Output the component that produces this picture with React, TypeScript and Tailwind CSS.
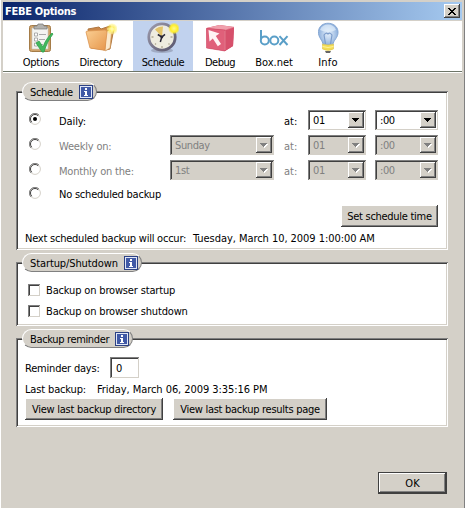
import type { ReactNode } from "react";

const raised =
  "bg-[#d4d0c8] shadow-[inset_-1px_-1px_#404040,inset_1px_1px_#fff,inset_-2px_-2px_#808080]";
const sunken =
  "shadow-[inset_1px_1px_#808080,inset_-1px_-1px_#d4d0c8,inset_2px_2px_#404040]";

function Label({ children, className = "" }: { children: ReactNode; className?: string }) {
  return <span className={`block translate-y-px ${className}`}>{children}</span>;
}

function InfoBadge() {
  return (
    <svg width="14" height="14" viewBox="0 0 14 14" className="shrink-0" shapeRendering="crispEdges">
      <rect width="14" height="14" fill="#2c4184" />
      <rect x="1" y="1" width="12" height="12" fill="#dfe6f6" />
      <rect x="2" y="2" width="10" height="10" fill="#4059a6" />
      <path d="M6 3h2v2H6zM5 6h3v4h1v1H5v-1h1V7H5z" fill="#fff" />
    </svg>
  );
}

function Group({ title, titleClass, size, pill, children }: { title: string; titleClass: string; size: string; pill: string; children: ReactNode }) {
  return (
    <section className={`relative w-[432px] bg-white shadow-[inset_1px_1px_#808080,inset_-1px_-1px_#fff,inset_2px_2px_#404040,inset_-2px_-2px_#d4d0c8] ${size}`}>
      <div className={`absolute left-[6px] top-[-9px] flex h-[19px] items-center justify-between rounded-full border border-[#fff] border-b-[#808080] border-r-[#808080] bg-[#d4d0c8] pl-[7px] pr-[3px] ${pill}`}>
        <Label className={titleClass}>{title}</Label>
        <InfoBadge />
      </div>
      {children}
    </section>
  );
}

function Select({ value, width, disabled = false }: { value: string; width: string; disabled?: boolean }) {
  return (
    <div className={`flex h-5 shrink-0 items-center justify-between p-[2px] pl-[5px] ${sunken} ${width} ${disabled ? "bg-[#d4d0c8] text-[#808080]" : "bg-white"}`}>
      <Label className="tracking-[-0.4px]">{value}</Label>
      <span className={`flex h-4 w-4 items-center justify-center ${raised}`}>
        <svg width="8" height="5" viewBox="0 0 8 5" shapeRendering="crispEdges">
          {disabled && <path d="M1 1h7v1H7v1H6v1H5v1H4V4H3V3H2V2H1z" fill="#fff" />}
          <path d="M0 0h7v1H6v1H5v1H4v1H3V3H2V2H1V1H0z" fill={disabled ? "#808080" : "#000"} />
        </svg>
      </span>
    </div>
  );
}

function Radio({ checked = false }: { checked?: boolean }) {
  return (
    <svg width="12" height="12" viewBox="0 0 12 12" className="shrink-0">
      <circle cx="6" cy="6" r="5.4" fill="#fff" stroke="#d4d0c8" />
      <path d="M2 10A5.5 5.5 0 0 1 10 2" fill="none" stroke="#808080" />
      <path d="M2.8 9.2A4.5 4.5 0 0 1 9.2 2.8" fill="none" stroke="#404040" />
      {checked && <circle cx="6" cy="6" r="2" fill="#000" />}
    </svg>
  );
}

function ScheduleRow({ label, labelClass, day, disabled, checked }: { label: string; labelClass: string; day?: string; disabled?: boolean; checked?: boolean }) {
  return (
    <div className={`flex h-[25px] items-start ${disabled ? "text-[#808080]" : ""}`}>
      <div className="w-[30px] pt-[3px]"><Radio checked={checked} /></div>
      <div className="flex h-[22px] w-[111px] items-center"><Label className={labelClass}>{label}</Label></div>
      <div className="w-[114px]">{day && <Select value={day} width="w-[104px]" disabled />}</div>
      <div className="flex h-[22px] w-[24px] items-center"><Label>at:</Label></div>
      <Select value="01" width="w-[58px]" disabled={disabled} />
      <div className="w-[9px]" />
      <Select value=":00" width="w-[63px]" disabled={disabled} />
    </div>
  );
}

function Button({ children, className }: { children: ReactNode; className: string }) {
  return (
    <button className={`flex h-[22px] shrink-0 items-center justify-center ${raised} ${className}`}>
      <Label>{children}</Label>
    </button>
  );
}

function CheckRow({ label }: { label: string }) {
  return (
    <label className="flex h-[21px] items-center">
      <span className={`mr-[6px] h-3 w-3 bg-white ${sunken}`} />
      <Label className="tracking-[-0.16px]">{label}</Label>
    </label>
  );
}

function OptionsIcon() {
  return (
    <svg width="32" height="32" viewBox="0 0 32 32">
      <rect x="4.500" y="3.500" width="21" height="26" rx="2" fill="#cfa36b" stroke="#a57c48" />
      <path d="M7 6h16v21H7z" fill="#f4f4f1" stroke="#c9c9c4" strokeWidth=".6" />
      <path d="M9 7V4h3l1-2h5l1 2h3v3z" fill="#b3b2ae" stroke="#777" strokeWidth=".7" />
      <path d="M9.500 11h3v3h-3zM9.500 16h3v3h-3zM9.500 21h3v3h-3z" fill="#fff" stroke="#999" strokeWidth=".8" />
      <path d="M14 12.500h7M14 17.500h6M14 22.500h4" stroke="#aaa" />
      <path d="M11 21l3-2 4 6c2-6 5-10 9-14l1 1c-4 5-7 11-9 18h-2z" fill="#43b85d" stroke="#2fa24c" strokeWidth=".8" />
    </svg>
  );
}

function DirectoryIcon() {
  return (
    <svg width="32" height="32" viewBox="0 0 32 32">
      <defs>
        <linearGradient id="folder" x2="1" y2="1"><stop stopColor="#fbcf94" /><stop offset="1" stopColor="#e6964a" /></linearGradient>
        <radialGradient id="spark"><stop stopColor="#fffdb0" /><stop offset=".35" stopColor="#fff36b" /><stop offset="1" stopColor="#ffe936" stopOpacity="0" /></radialGradient>
      </defs>
      <path d="M3 7l11-2 2 2 9-3 4 2-4 21-4 1L6 26z" fill="#cb8748" stroke="#b07842" />
      <path d="M21 10l6-4-2 20-5 3z" fill="#fbe9cc" stroke="#d09552" strokeWidth=".6" />
      <path d="M1 10q0-1 2-1l17-1q2 0 2 2l-2 17q0 2-2 1L5 26z" fill="url(#folder)" stroke="#dc9450" strokeWidth=".8" />
      <circle cx="27" cy="7" r="6" fill="url(#spark)" />
      <path d="M27 2v10M22 7h10" stroke="#fff9b2" strokeWidth=".8" />
    </svg>
  );
}

function ScheduleIcon() {
  return (
    <svg width="32" height="32" viewBox="0 0 32 32">
      <defs>
        <linearGradient id="rim" y2="1"><stop stopColor="#9d9bad" /><stop offset="1" stopColor="#58556c" /></linearGradient>
        <radialGradient id="glow"><stop stopColor="#fff98c" /><stop offset=".6" stopColor="#ffee2a" /><stop offset="1" stopColor="#ffe92a" stopOpacity="0" /></radialGradient>
      </defs>
      <ellipse cx="15" cy="28.500" rx="11" ry="2.500" fill="#777c91" opacity=".45" />
      <circle cx="15" cy="15" r="13.200" fill="#eeecdf" stroke="url(#rim)" strokeWidth="2.800" />
      <path d="M15 14.700L8 7.500q3-3 8-3z" fill="#e3c468" />
      <path d="M15 24v2M4.500 15h2M23.500 15h2M8 22.500l1-1M21.500 21.500l1 1" stroke="#b0a892" strokeWidth="1.300" />
      <path d="M10.800 12.500l4 2.500 3.200-2.600M14.800 15l-1.500 5" fill="none" stroke="#292735" strokeWidth="1.500" />
      <circle cx="14.800" cy="15" r="1.400" fill="#292735" />
      <circle cx="27" cy="6.500" r="6" fill="url(#glow)" />
    </svg>
  );
}

function DebugIcon() {
  return (
    <svg width="32" height="32" viewBox="0 0 32 32">
      <path d="M2.500 6l13-3 14.500 2-1 19-8 5-18-3z" fill="#cf4a64" />
      <path d="M2.500 6l13-3 14.500 2-9 3z" fill="#f0a0ac" />
      <path d="M21 8l9-3-1 19-8 5z" fill="#d6506b" />
      <path d="M2.500 6.500l18.500 1.500v21L2.500 26z" fill="#e0607a" stroke="#d04c66" strokeWidth=".6" />
      <path d="M4.500 8l11 3.500-3.700 2.500 5.200 8-3.200 2.200-5-7.700-3.300 3z" fill="#fff4f5" />
      <path d="M21 9v19M21 8l9-3" stroke="#ee9caa" strokeWidth=".6" />
    </svg>
  );
}

function BoxIcon() {
  return (
    <svg width="32" height="32" viewBox="0 0 32 32" fill="none" stroke="#5a9fc8" strokeWidth="2">
      <path d="M3 8v10" />
      <circle cx="6.800" cy="18.500" r="4" />
      <circle cx="16.300" cy="18.500" r="4" />
      <path d="M21.500 14.200l8 8.800M29.500 14.200l-8 8.800" />
    </svg>
  );
}

function InfoIcon() {
  return (
    <svg width="32" height="32" viewBox="0 0 32 32">
      <defs><radialGradient id="bulb"><stop stopColor="#e2edf9" /><stop offset=".55" stopColor="#b9d0ec" /><stop offset="1" stopColor="#8eb0dc" /></radialGradient></defs>
      <path d="M11 23c0-5-5-7-4.500-13.500C7-1.500 25-1.500 26 9.500c.5 6.500-5 8.500-5 13.500z" fill="url(#bulb)" stroke="#86a8d4" />
      <path d="M13.500 22l-1.500-9q2-3 4-1 2-2 4 1l-1.500 9" fill="none" stroke="#7d9dcb" strokeWidth="1.200" />
      <path d="M8 8q2-5.500 8-5.500T24 8q-8 4-16 0" fill="#edf6ff" opacity=".6" />
      <path d="M10.500 22q5.500 2 11 0v5q-5.500 3-11 0z" fill="#f3dd55" stroke="#dfc450" strokeWidth=".6" />
      <path d="M10.500 24.500q5.500 2 11 0" fill="none" stroke="#fff29a" />
      <path d="M13 29h6l-1 2h-4z" fill="#666" />
    </svg>
  );
}

const tools = [
  { label: "Options", icon: <OptionsIcon />, box: "w-[60px]", text: "tracking-[-0.25px]" },
  { label: "Directory", icon: <DirectoryIcon />, box: "w-[60px]", text: "tracking-[-0.3px]" },
  { label: "Schedule", icon: <ScheduleIcon />, box: "w-[60px] ml-[2px] bg-[#c1d2ee]", text: "tracking-[-0.35px]" },
  { label: "Debug", icon: <DebugIcon />, box: "w-[54px]", text: "tracking-[-0.5px]" },
  { label: "Box.net", icon: <BoxIcon />, box: "w-[54px]", text: "" },
  { label: "Info", icon: <InfoIcon />, box: "w-[54px]", text: "tracking-[0.2px]" },
];

export default function App() {
  return (
    <main className="h-[508px] w-[465px] overflow-hidden whitespace-nowrap border-l border-r border-l-white border-r-[#808080] bg-[#d4d0c8] pl-[2px] pr-[2px] pt-[2px] font-['DejaVu_Sans_Condensed','DejaVu_Sans',sans-serif] text-[11px] leading-[14px] text-black [font-stretch:condensed]">
      <header className="flex h-[18px] items-center justify-between bg-linear-to-r/srgb from-[#0a246a] to-[#a6caf0] pl-[2px] pr-[2px] text-white">
        <Label className="font-bold tracking-[-0.3px]">FEBE Options</Label>
        <button className={`flex h-[14px] w-4 items-center justify-center ${raised}`}>
          <svg width="8" height="7" viewBox="0 0 8 7" shapeRendering="crispEdges">
            <path d="M0 0h2v1h1v1h2V1h1V0h2v1H7v1H6v1H5v1h1v1h1v1h1v1H6V6H5V5H3v1H2v1H0V6h1V5h1V4h1V3H2V2H1V1H0z" fill="#000" />
          </svg>
        </button>
      </header>
      <nav className="mt-px flex h-[52px] border-b border-b-white bg-white pl-[8px] shadow-[inset_0_-1px_#6d7568]">
        {tools.map((t) => (
          <div key={t.label} className={`flex h-[50px] flex-col items-center pt-px ${t.box}`}>
            {t.icon}
            <Label className={`mt-[1px] ${t.text}`}>{t.label}</Label>
          </div>
        ))}
      </nav>
      <div className="pl-[13px] pt-[18px]">
        <Group title="Schedule" titleClass="tracking-[-0.35px]" size="h-[159px]" pill="w-[75px]">
          <div className="pl-[13px] pt-[19px]">
            <ScheduleRow label="Daily:" labelClass="tracking-[-0.1px]" checked />
            <ScheduleRow label="Weekly on:" labelClass="tracking-[-0.2px]" day="Sunday" disabled />
            <ScheduleRow label="Monthly on the:" labelClass="tracking-[-0.2px]" day="1st" disabled />
            <div className="flex h-[20px] items-start">
              <div className="w-[30px] pt-[2px]"><Radio /></div>
              <Label className="pt-[2px] tracking-[-0.22px]">No scheduled backup</Label>
            </div>
          </div>
          <div className="flex justify-end pr-[10px]">
            <Button className="w-[97px] tracking-[-0.28px]">Set schedule time</Button>
          </div>
          <div className="flex pl-[9px] pt-[4px]">
            <Label className="w-[168px] tracking-[-0.23px]">Next scheduled backup will occur:</Label>
            <Label className="tracking-[-0.05px]">Tuesday, March 10, 2009 1:00:00 AM</Label>
          </div>
        </Group>
        <div className="h-[12px]" />
        <Group title="Startup/Shutdown" titleClass="tracking-[-0.1px]" size="h-[64px]" pill="w-[120px]">
          <div className="pl-[12px] pt-[17px]">
            <CheckRow label="Backup on browser startup" />
            <CheckRow label="Backup on browser shutdown" />
          </div>
        </Group>
        <div className="h-[12px]" />
        <Group title="Backup reminder" titleClass="tracking-[-0.35px]" size="h-[89px]" pill="w-[111px]">
          <div className="pl-[9px] pt-[19px]">
            <div className="flex h-[21px] items-center">
              <Label className="w-[85px] tracking-[-0.2px]">Reminder days:</Label>
              <span className={`flex h-[21px] w-[29px] items-center bg-white pl-[6px] ${sunken}`}><Label>0</Label></span>
            </div>
            <div className="flex pt-[4px]">
              <Label className="w-[72px] tracking-[-0.15px]">Last backup:</Label>
              <Label className="tracking-[-0.06px]">Friday, March 06, 2009 3:35:16 PM</Label>
            </div>
            <div className="flex gap-[10px] pt-[2px]">
              <Button className="w-[138px] tracking-[-0.26px]">View last backup directory</Button>
              <Button className="w-[154px] tracking-[-0.27px]">View last backup results page</Button>
            </div>
          </div>
        </Group>
        <div className="flex justify-end pr-[15px] pt-[45px]">
          <div className="bg-[#404040] p-px">
            <button className={`flex h-5 w-[67px] items-center justify-center ${raised}`}><Label>OK</Label></button>
          </div>
        </div>
      </div>
    </main>
  );
}
